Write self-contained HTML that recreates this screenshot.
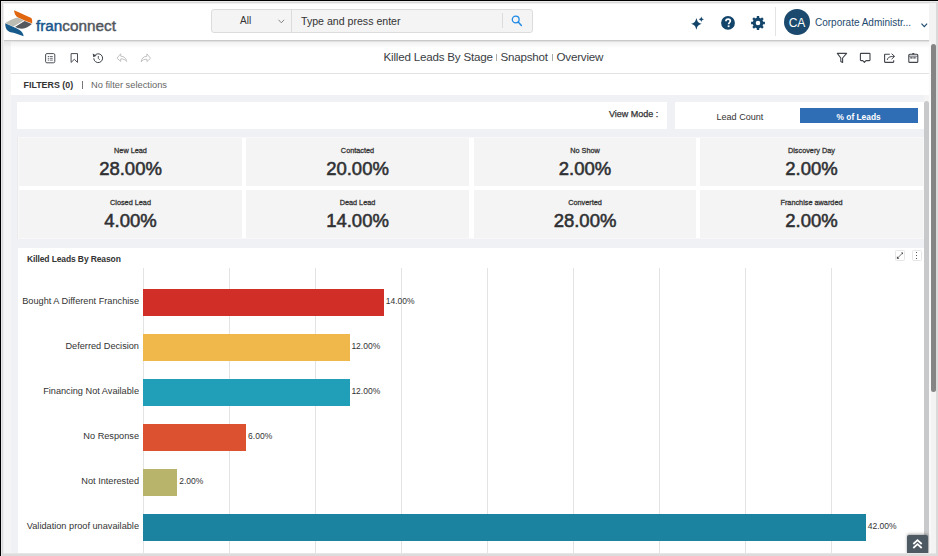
<!DOCTYPE html>
<html><head><meta charset="utf-8">
<style>
*{margin:0;padding:0;box-sizing:border-box}
html,body{width:938px;height:556px;overflow:hidden;background:#f5f5f5;font-family:"Liberation Sans",sans-serif;color:#333}
.a{position:absolute}
.t{position:absolute;white-space:nowrap;line-height:1}
svg{position:absolute;overflow:visible}
</style></head><body>
<div class="a" style="left:2px;top:2px;width:927px;height:38px;background:#fff"></div>
<svg style="left:0;top:0" width="40" height="40" viewBox="0 0 40 40">
<path d="M14.1 10.3 C19 12.5 26 15.5 30.8 17.8 C32 18.5 32.3 19.5 32.2 23.6 C29 22.3 26.5 21.2 24 20.3 L18 17.6 C15.5 16 14.2 13.5 14.1 10.3Z" fill="#e0660f"/>
<path d="M5.2 23 C8.5 21 13 18.8 16.4 17.8 C18.5 17.4 21.5 19.4 23.8 20.4 L13.5 26.4 Z" fill="#bdbcb2"/>
<path d="M24.6 21.1 L31.9 24.1 C29 26.5 25.5 28.5 22.1 28.7 C19.5 28.7 17 27.6 15 26.9 Z" fill="#55585d"/>
<path d="M5.2 23.3 L13.5 27 C16 28 18 29 19.5 30 C22 31.5 23.3 33.5 23.6 36.3 C19 34.5 14 32.6 10.6 32.2 C7 31 5.3 29 5.2 23.3Z" fill="#175a8c"/>
</svg>
<div class="t" style="left:36px;top:17.6px;font-size:15.3px;color:#17558c;-webkit-text-stroke:0.45px #17558c">fran<span style="color:#52575e;-webkit-text-stroke:0.45px #52575e">connect</span></div>
<div class="a" style="left:211px;top:9px;width:322px;height:24px;background:#f4f4f4;border:1px solid #dcdcdc;border-radius:3px"></div>
<div class="a" style="left:291px;top:10px;width:1px;height:22px;background:#dcdcdc"></div>
<div class="a" style="left:502px;top:13px;width:1px;height:15px;background:#dcdcdc"></div>
<div class="t" style="left:240px;top:16px;font-size:10px;color:#333">All</div>
<svg style="left:278px;top:19px" width="7" height="5" viewBox="0 0 7 5"><path d="M0.5 0.8 L3.3 3.8 L6.1 0.8" fill="none" stroke="#777" stroke-width="0.9"/></svg>
<div class="t" style="left:301px;top:15.5px;font-size:10.6px;color:#333">Type and press enter</div>
<svg style="left:510px;top:14px" width="14" height="14" viewBox="0 0 14 14"><circle cx="5.7" cy="5.5" r="3.4" fill="none" stroke="#1e88e5" stroke-width="1.3"/><path d="M8.2 8 L11.4 11.4" stroke="#1e88e5" stroke-width="1.4" stroke-linecap="round"/></svg>
<svg style="left:686px;top:12px" width="22" height="22" viewBox="0 0 22 22">
<path d="M10.4 5.9 C11.80 10.27 11.80 10.27 15.8 11.8 C11.80 13.33 11.80 13.33 10.4 17.700000000000003 C9.00 13.33 9.00 13.33 5.0 11.8 C9.00 10.27 9.00 10.27 10.4 5.9Z" fill="#13446a"/>
<path d="M15.3 4.4 C16.00 6.47 16.00 6.47 18.0 7.2 C16.00 7.93 16.00 7.93 15.3 10.0 C14.60 7.93 14.60 7.93 12.600000000000001 7.2 C14.60 6.47 14.60 6.47 15.3 4.4Z" fill="#13446a"/>
</svg>
<svg style="left:721px;top:16px" width="14" height="14" viewBox="0 0 14 14">
<circle cx="7" cy="6.9" r="6.9" fill="#13446a"/>
<path d="M4.9 5.3 C4.9 3.9 5.9 3.1 7.1 3.1 C8.4 3.1 9.3 3.9 9.3 5 C9.3 6.4 7.6 6.6 7.6 8.3" fill="none" stroke="#fff" stroke-width="1.7"/>
<rect x="6.7" y="9.4" width="1.8" height="1.7" fill="#fff"/>
</svg>
<svg style="left:751px;top:16px" width="14" height="14" viewBox="0 0 14 14"><path d="M5.79 1.84 L5.82 0.10 L8.18 0.10 L8.21 1.84 L9.03 2.10 L9.79 2.50 L11.04 1.28 L12.72 2.96 L11.50 4.21 L11.90 4.97 L12.16 5.79 L13.90 5.82 L13.90 8.18 L12.16 8.21 L11.90 9.03 L11.50 9.79 L12.72 11.04 L11.04 12.72 L9.79 11.50 L9.03 11.90 L8.21 12.16 L8.18 13.90 L5.82 13.90 L5.79 12.16 L4.97 11.90 L4.21 11.50 L2.96 12.72 L1.28 11.04 L2.50 9.79 L2.10 9.03 L1.84 8.21 L0.10 8.18 L0.10 5.82 L1.84 5.79 L2.10 4.97 L2.50 4.21 L1.28 2.96 L2.96 1.28 L4.21 2.50 L4.97 2.10Z M9.30 7 A2.3 2.3 0 1 0 4.70 7 A2.3 2.3 0 1 0 9.30 7Z" fill="#13446a" fill-rule="evenodd"/></svg>
<div class="a" style="left:775px;top:7px;width:1px;height:29px;background:#e3e3e3"></div>
<div class="a" style="left:784px;top:9px;width:26px;height:26px;border-radius:50%;background:#1b4a6e"></div>
<div class="t" style="left:784px;width:26px;text-align:center;top:16.5px;font-size:12px;color:#fff">CA</div>
<div class="t" style="left:815px;top:17.5px;font-size:10px;color:#1e4a6d">Corporate Administr...</div>
<svg style="left:921px;top:23px" width="7" height="5" viewBox="0 0 7 5"><path d="M0.5 0.6 L3.3 3.6 L6.1 0.6" fill="none" stroke="#1e4a6d" stroke-width="1.1"/></svg>
<div class="a" style="left:11px;top:42px;width:918px;height:32px;background:#fff;border-bottom:1px solid #e3e3e3"></div>
<div class="a" style="left:11px;top:74px;width:918px;height:21px;background:#fff"></div>
<div class="a" style="left:2px;top:40px;width:927px;height:1px;background:#c9c9c9"></div>
<div class="a" style="left:2px;top:41px;width:927px;height:1px;background:#e2e2e2"></div>
<div class="a" style="left:2px;top:42px;width:927px;height:6px;background:linear-gradient(rgba(0,0,0,.055),rgba(0,0,0,0))"></div>
<svg style="left:40px;top:48px" width="120" height="20" viewBox="0 0 120 20">
<rect x="5.6" y="5.6" width="9.2" height="9.2" rx="1.3" fill="none" stroke="#40444b" stroke-width="0.95"/>
<g fill="#40444b"><rect x="7.8" y="8" width="1" height="1"/><rect x="7.8" y="9.8" width="1" height="1"/><rect x="7.8" y="11.6" width="1" height="1"/></g>
<g stroke="#40444b" stroke-width="0.75"><path d="M9.7 8.5 H12.8 M9.7 10.3 H12.8 M9.7 12.1 H12.8"/></g>
<path d="M31.1 5.6 H37.5 V14.4 L34.3 11.3 L31.1 14.4Z" fill="none" stroke="#40444b" stroke-width="0.95" stroke-linejoin="round"/>
<path d="M55.4 6.8 A4.4 4.4 0 1 1 53.8 10.3" fill="none" stroke="#40444b" stroke-width="1"/>
<path d="M52.7 5.6 L53.3 9.2 L56.6 7.7Z" fill="#40444b"/>
<path d="M58.3 8 V10.4 L59.7 11.8" fill="none" stroke="#40444b" stroke-width="0.9"/>
<path d="M77 10.2 L80.7 5.8 V8.2 C84 8.2 86.1 10 86.6 13.5 C85.5 11.8 83.3 10.8 80.7 10.9 V13.5Z" fill="none" stroke="#b8b8b8" stroke-width="0.85" stroke-linejoin="round"/>
<path d="M110.6 10.3 L106.9 5.9 V8.3 C103.6 8.3 101.5 10.5 101.2 13.8 C102.3 11.9 104.3 11.1 106.9 11.2 V13.6Z" fill="none" stroke="#b8b8b8" stroke-width="0.85" stroke-linejoin="round"/>
</svg>
<svg style="left:832px;top:48px" width="92" height="20" viewBox="0 0 92 20">
<path d="M5.3 5.4 H14.6 L10.6 10 V14.5 L8.8 13.6 V10Z" fill="none" stroke="#40444b" stroke-width="1.1" stroke-linejoin="round"/>
<path d="M29 5.4 H37.3 Q38 5.4 38 6.1 V12 Q38 12.6 37.3 12.6 H34 L32.4 14.3 L30.8 12.6 H29 Q28.4 12.6 28.4 12 V6.1 Q28.4 5.4 29 5.4Z" fill="none" stroke="#40444b" stroke-width="1.1" stroke-linejoin="round"/>
<path d="M57.8 6.2 H53.1 Q52.6 6.2 52.6 6.8 V13.8 Q52.6 14.4 53.1 14.4 H61.2 Q61.7 14.4 61.7 13.8 V12.2" fill="none" stroke="#40444b" stroke-width="1.1"/>
<path d="M55.3 11.9 C55.7 9.4 57.6 8.4 62 8.4" fill="none" stroke="#40444b" stroke-width="1"/><path d="M59.6 5.7 L62.6 8.4 L59.6 11.1" fill="none" stroke="#40444b" stroke-width="1" stroke-linejoin="round"/>
<rect x="76.8" y="6.3" width="9" height="8.1" rx="1" fill="none" stroke="#40444b" stroke-width="1.1"/>
<path d="M76.8 8.2 H85.8" stroke="#40444b" stroke-width="0.8"/><path d="M78.2 9.9 H84.6" stroke="#40444b" stroke-width="1.1" stroke-dasharray="2.4 0.7"/>
<rect x="80.3" y="5" width="2" height="1.4" fill="#40444b"/>
</svg>
<div class="t" style="left:383.5px;top:50.5px;font-size:11.6px;letter-spacing:-0.2px;color:#3a3d43">Killed Leads By Stage</div>
<div class="a" style="left:496px;top:54px;width:1px;height:7px;background:#aaa"></div>
<div class="t" style="left:500.5px;top:50.5px;font-size:11.6px;letter-spacing:-0.2px;color:#3a3d43">Snapshot</div>
<div class="a" style="left:552px;top:54px;width:1px;height:7px;background:#aaa"></div>
<div class="t" style="left:556.5px;top:50.5px;font-size:11.6px;letter-spacing:-0.2px;color:#3a3d43">Overview</div>
<div class="t" style="left:23.5px;top:81px;font-size:8.9px;font-weight:bold;color:#333">FILTERS (0)</div>
<div class="a" style="left:82px;top:81px;width:1px;height:8px;background:#777"></div>
<div class="t" style="left:91px;top:81px;font-size:9.3px;color:#666">No filter selections</div>
<div class="a" style="left:11px;top:95px;width:913px;height:458px;background:#f0f1f5"></div>
<div class="a" style="left:17px;top:102px;width:650px;height:27px;background:#fff"></div>
<div class="t" style="left:609px;top:110px;font-size:9px;color:#333;-webkit-text-stroke:0.25px #333">View Mode :</div>
<div class="a" style="left:675px;top:102px;width:249px;height:27px;background:#fff"></div>
<div class="t" style="left:716.5px;top:112.5px;font-size:9.05px;color:#333">Lead Count</div>
<div class="a" style="left:800px;top:108px;width:118px;height:15px;background:#2f6db5"></div>
<div class="t" style="left:836.5px;top:112.5px;font-size:8.4px;font-weight:bold;color:#fff">% of Leads</div>
<div class="a" style="left:17px;top:137px;width:907px;height:102px;background:#f8f8f8;border-left:1px solid #ebebeb"></div>
<div class="a" style="left:242px;top:138px;width:4px;height:100px;background:#fff"></div>
<div class="a" style="left:469px;top:138px;width:5px;height:100px;background:#fff"></div>
<div class="a" style="left:696px;top:138px;width:4px;height:100px;background:#fff"></div>
<div class="a" style="left:19px;top:186px;width:904px;height:4px;background:#fff"></div>
<div class="a" style="left:19px;top:138px;width:223px;height:48px;background:#f4f4f4"></div>
<div class="t" style="left:19px;width:223px;text-align:center;top:147.2px;font-size:7.3px;color:#333;-webkit-text-stroke:0.28px #333">New Lead</div>
<div class="t" style="left:19px;width:223px;text-align:center;top:160.3px;font-size:18.5px;color:#2f3033;-webkit-text-stroke:0.55px #2f3033">28.00%</div>
<div class="a" style="left:246px;top:138px;width:223px;height:48px;background:#f4f4f4"></div>
<div class="t" style="left:246px;width:223px;text-align:center;top:147.2px;font-size:7.3px;color:#333;-webkit-text-stroke:0.28px #333">Contacted</div>
<div class="t" style="left:246px;width:223px;text-align:center;top:160.3px;font-size:18.5px;color:#2f3033;-webkit-text-stroke:0.55px #2f3033">20.00%</div>
<div class="a" style="left:474px;top:138px;width:222px;height:48px;background:#f4f4f4"></div>
<div class="t" style="left:474px;width:222px;text-align:center;top:147.2px;font-size:7.3px;color:#333;-webkit-text-stroke:0.28px #333">No Show</div>
<div class="t" style="left:474px;width:222px;text-align:center;top:160.3px;font-size:18.5px;color:#2f3033;-webkit-text-stroke:0.55px #2f3033">2.00%</div>
<div class="a" style="left:700px;top:138px;width:223px;height:48px;background:#f4f4f4"></div>
<div class="t" style="left:700px;width:223px;text-align:center;top:147.2px;font-size:7.3px;color:#333;-webkit-text-stroke:0.28px #333">Discovery Day</div>
<div class="t" style="left:700px;width:223px;text-align:center;top:160.3px;font-size:18.5px;color:#2f3033;-webkit-text-stroke:0.55px #2f3033">2.00%</div>
<div class="a" style="left:19px;top:190px;width:223px;height:48px;background:#f4f4f4"></div>
<div class="t" style="left:19px;width:223px;text-align:center;top:199.2px;font-size:7.3px;color:#333;-webkit-text-stroke:0.28px #333">Closed Lead</div>
<div class="t" style="left:19px;width:223px;text-align:center;top:212.3px;font-size:18.5px;color:#2f3033;-webkit-text-stroke:0.55px #2f3033">4.00%</div>
<div class="a" style="left:246px;top:190px;width:223px;height:48px;background:#f4f4f4"></div>
<div class="t" style="left:246px;width:223px;text-align:center;top:199.2px;font-size:7.3px;color:#333;-webkit-text-stroke:0.28px #333">Dead Lead</div>
<div class="t" style="left:246px;width:223px;text-align:center;top:212.3px;font-size:18.5px;color:#2f3033;-webkit-text-stroke:0.55px #2f3033">14.00%</div>
<div class="a" style="left:474px;top:190px;width:222px;height:48px;background:#f4f4f4"></div>
<div class="t" style="left:474px;width:222px;text-align:center;top:199.2px;font-size:7.3px;color:#333;-webkit-text-stroke:0.28px #333">Converted</div>
<div class="t" style="left:474px;width:222px;text-align:center;top:212.3px;font-size:18.5px;color:#2f3033;-webkit-text-stroke:0.55px #2f3033">28.00%</div>
<div class="a" style="left:700px;top:190px;width:223px;height:48px;background:#f4f4f4"></div>
<div class="t" style="left:700px;width:223px;text-align:center;top:199.2px;font-size:7.3px;color:#333;-webkit-text-stroke:0.28px #333">Franchise awarded</div>
<div class="t" style="left:700px;width:223px;text-align:center;top:212.3px;font-size:18.5px;color:#2f3033;-webkit-text-stroke:0.55px #2f3033">2.00%</div>
<div class="a" style="left:18px;top:248px;width:906px;height:306px;background:#fff"></div>
<div class="t" style="left:27px;top:254.5px;font-size:8.5px;letter-spacing:-0.12px;font-weight:bold;color:#333">Killed Leads By Reason</div>
<div class="a" style="left:895px;top:250px;width:9.5px;height:10.5px;border:1px solid #e6e6e6;border-radius:1.5px"></div>
<svg style="left:895px;top:250px" width="10" height="11" viewBox="0 0 10 11"><path d="M2.3 8.3 L7.6 3" stroke="#555" stroke-width="0.8"/><path d="M1.9 6.2 V8.7 H4.4Z M8 2.6 H6 L8 4.6Z" fill="#444"/></svg>
<div class="a" style="left:912px;top:250px;width:9.5px;height:10.5px;border:1px solid #e6e6e6;border-radius:1.5px"></div>
<div class="a" style="left:916px;top:252px;width:1.3px;height:1.3px;background:#555"></div><div class="a" style="left:916px;top:254.8px;width:1.3px;height:1.3px;background:#555"></div><div class="a" style="left:916px;top:257.5px;width:1.3px;height:1.3px;background:#555"></div>
<div class="a" style="left:142.5px;top:268px;width:1px;height:286px;background:#e3e3e3"></div>
<div class="a" style="left:228.6px;top:268px;width:1px;height:286px;background:#e3e3e3"></div>
<div class="a" style="left:314.6px;top:268px;width:1px;height:286px;background:#e3e3e3"></div>
<div class="a" style="left:400.7px;top:268px;width:1px;height:286px;background:#e3e3e3"></div>
<div class="a" style="left:486.8px;top:268px;width:1px;height:286px;background:#e3e3e3"></div>
<div class="a" style="left:572.9px;top:268px;width:1px;height:286px;background:#e3e3e3"></div>
<div class="a" style="left:658.9px;top:268px;width:1px;height:286px;background:#e3e3e3"></div>
<div class="a" style="left:745.0px;top:268px;width:1px;height:286px;background:#e3e3e3"></div>
<div class="a" style="left:831.1px;top:268px;width:1px;height:286px;background:#e3e3e3"></div>
<div class="a" style="left:143px;top:289px;width:241.0px;height:27px;background:#d02e27"></div>
<div class="t" style="right:799px;top:297.1px;font-size:9.2px;color:#333">Bought A Different Franchise</div>
<div class="t" style="left:385.8px;top:297px;font-size:8.5px;color:#333">14.00%</div>
<div class="a" style="left:143px;top:334px;width:206.6px;height:27px;background:#f0b84a"></div>
<div class="t" style="right:799px;top:342.1px;font-size:9.2px;color:#333">Deferred Decision</div>
<div class="t" style="left:351.4px;top:342px;font-size:8.5px;color:#333">12.00%</div>
<div class="a" style="left:143px;top:379px;width:206.6px;height:27px;background:#229fb8"></div>
<div class="t" style="right:799px;top:387.1px;font-size:9.2px;color:#333">Financing Not Available</div>
<div class="t" style="left:351.4px;top:387px;font-size:8.5px;color:#333">12.00%</div>
<div class="a" style="left:143px;top:424px;width:103.3px;height:27px;background:#dc5130"></div>
<div class="t" style="right:799px;top:432.1px;font-size:9.2px;color:#333">No Response</div>
<div class="t" style="left:248.1px;top:432px;font-size:8.5px;color:#333">6.00%</div>
<div class="a" style="left:143px;top:469px;width:34.4px;height:27px;background:#b8b46c"></div>
<div class="t" style="right:799px;top:477.1px;font-size:9.2px;color:#333">Not Interested</div>
<div class="t" style="left:179.2px;top:477px;font-size:8.5px;color:#333">2.00%</div>
<div class="a" style="left:143px;top:514px;width:723.0px;height:27px;background:#1b82a0"></div>
<div class="t" style="right:799px;top:522.1px;font-size:9.2px;color:#333">Validation proof unavailable</div>
<div class="t" style="left:867.8px;top:522px;font-size:8.5px;color:#333">42.00%</div>
<div class="a" style="left:924px;top:101px;width:5px;height:453px;background:#c8c9cb;border-radius:3px 3px 0 0"></div>
<div class="a" style="left:929px;top:2px;width:9px;height:552px;background:#f3f3f3"></div>
<div class="a" style="left:929px;top:42px;width:2px;height:511px;background:#f9f9f9"></div>
<div class="a" style="left:931px;top:44px;width:5px;height:348px;background:#858585;border-radius:3px"></div>
<div class="a" style="left:2px;top:553px;width:936px;height:3px;background:#dcdcdc"></div>
<div class="a" style="left:907px;top:535px;width:21px;height:18.5px;background:#4d5a64;border-radius:2px 2px 0 0;box-shadow:0 -1px 3px rgba(0,0,0,.35)"></div>
<svg style="left:907px;top:535px" width="21" height="19" viewBox="0 0 21 19"><path d="M6.3 9 L10.5 5.2 L14.7 9 M6.3 13 L10.5 9.2 L14.7 13" fill="none" stroke="#fff" stroke-width="1.8"/></svg>
<div class="a" style="left:0;top:553px;width:938px;height:1px;background:#e6e6e6"></div>
<div class="a" style="left:0;top:554px;width:938px;height:2px;background:#dcdcdc"></div>
<div class="a" style="left:936px;top:0;width:2px;height:556px;background:#dadada"></div>
<div class="a" style="left:0;top:0;width:938px;height:1px;background:#000"></div>
<div class="a" style="left:1px;top:1px;width:937px;height:1px;background:#ececec"></div>
<div class="a" style="left:2px;top:2px;width:936px;height:1px;background:#dadada"></div>
<div class="a" style="left:3px;top:3px;width:926px;height:1px;background:#f0f0f0"></div>
<div class="a" style="left:0;top:0;width:1px;height:556px;background:#000"></div>
<div class="a" style="left:1px;top:1px;width:1px;height:555px;background:#e8e8e8"></div>
<div class="a" style="left:2px;top:2px;width:1px;height:554px;background:#dadada"></div>
<div class="a" style="left:3px;top:3px;width:1px;height:550px;background:#efefef"></div>
</body></html>
